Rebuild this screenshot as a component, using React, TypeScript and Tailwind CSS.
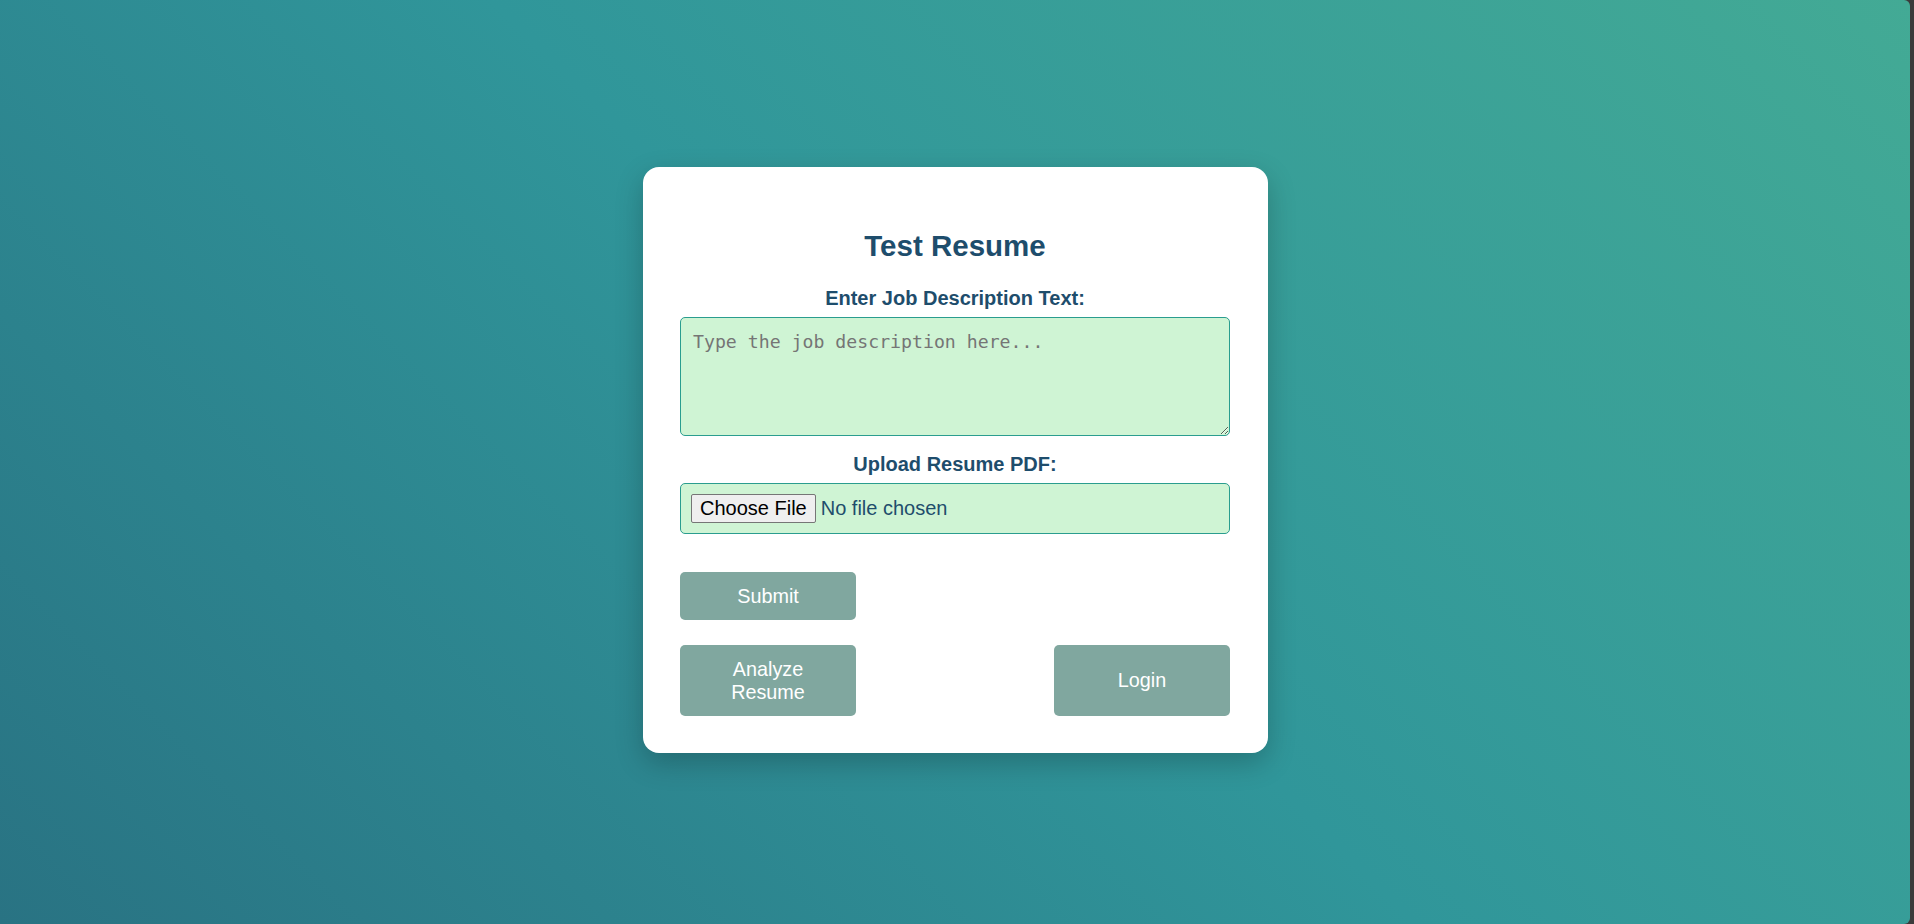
import React from 'react';

const sans = { fontFamily: '"Liberation Sans", Arial, sans-serif' };

export default function App() {
  return (
    <div className="h-screen w-full bg-[#3b3b3b] pr-[4px]" style={sans}>
      <div className="h-full w-full rounded-r-[6px] bg-linear-45 from-[#297383] via-[#30969a] to-[#43aa95] flex items-center justify-center">
        <div className="w-[625px] bg-white rounded-[16px] shadow-[0_10px_28px_rgba(0,0,0,0.22)] px-[37.5px] pt-[62px] pb-[37px] mt-[-4px]">
          <h2 className="text-center text-[29.5px] leading-[33px] font-bold text-[#1e4d6c]">Test Resume</h2>

          <label className="block mt-[25px] mb-[7px] text-center text-[20px] leading-[23px] font-bold text-[#1e4d6c]">
            Enter Job Description Text:
          </label>
          <textarea
            placeholder="Type the job description here..."
            className="block w-full h-[119px] rounded-[5px] border border-[#2a9d8f] bg-[#cff4d4] px-[12px] pt-[13px] pb-[10px] text-[18.2px] leading-[22px] text-[#1e4d6c] placeholder:text-[#757575] outline-none"
            style={{ fontFamily: '"DejaVu Sans Mono", monospace' }}
          />

          <label className="block mt-[17px] mb-[7px] text-center text-[20px] leading-[23px] font-bold text-[#1e4d6c]">
            Upload Resume PDF:
          </label>
          <input
            type="file"
            accept="application/pdf"
            className="block w-full h-[51px] rounded-[5px] border border-[#2a9d8f] bg-[#cff4d4] px-[10px] py-[10px] text-[20px] leading-[23px] text-[#1e4d6c] file:mr-[5px] file:rounded-[2px] file:border file:border-[#767676] file:bg-[#efefef] file:px-[8px] file:py-[2px] file:text-black"
          />

          <div className="mt-[38px] flex">
            <button className="w-[176px] h-[48px] rounded-[5px] bg-[#80a79f] text-white text-[19.8px] leading-[23px]">
              Submit
            </button>
          </div>

          <div className="mt-[25px] flex justify-between">
            <button className="w-[176px] h-[71px] rounded-[5px] bg-[#80a79f] px-[16px] text-white text-[19.8px] leading-[22.7px]">
              Analyze Resume
            </button>
            <button className="w-[176px] h-[71px] rounded-[5px] bg-[#80a79f] px-[16px] text-white text-[19.8px] leading-[22.7px]">
              Login
            </button>
          </div>
        </div>
      </div>
    </div>
  );
}
